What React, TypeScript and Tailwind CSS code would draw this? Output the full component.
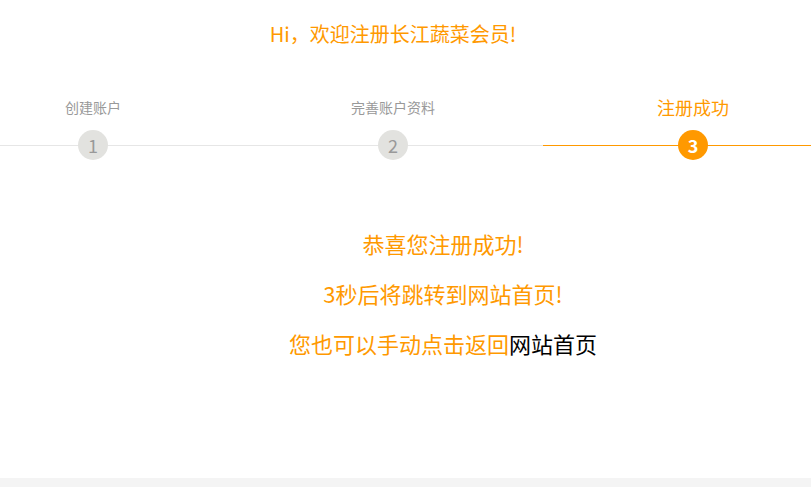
import React from "react";

const steps = [
  { n: 1, label: "创建账户", active: false },
  { n: 2, label: "完善账户资料", active: false },
  { n: 3, label: "注册成功", active: true },
];

const App: React.FC = () => {
  return (
    <div
      className="w-full h-[487px] overflow-hidden bg-white flex flex-col"
      style={{ fontFamily: '"Noto Sans CJK SC", "Noto Sans", sans-serif' }}
    >
      <div className="flex-1">
        <div className="w-[900px] ml-[-57px]">
          <h1 className="pt-[19px] h-[50px] text-center text-[20px] leading-[30px] text-[#ff9900]">
            Hi，欢迎注册长江蔬菜会员!
          </h1>
          <div className="flex mt-[41px]">
            {steps.map((s) => (
              <div key={s.n} className="w-[300px] flex flex-col items-center">
                <div
                  className={
                    s.active
                      ? "h-[32px] mb-[7px] leading-[32px] text-[18px] text-[#ff9900]"
                      : "h-[32px] mb-[7px] leading-[32px] text-[14px] text-[#999]"
                  }
                >
                  {s.label}
                </div>
                <div className="relative w-full h-[30px] flex items-center justify-center">
                  <div
                    className={
                      s.active
                        ? "absolute left-0 right-0 top-[15px] h-px bg-[#ff9900]"
                        : "absolute left-0 right-0 top-[15px] h-px bg-[#e6e6e6]"
                    }
                  />
                  <div
                    className={
                      s.active
                        ? "relative w-[30px] h-[30px] rounded-full bg-[#ff9900] text-white font-bold text-[18px] flex items-center justify-center"
                        : "relative w-[30px] h-[30px] rounded-full bg-[#e2e2df] text-[#999] text-[18px] flex items-center justify-center"
                    }
                  >
                    {s.n}
                  </div>
                </div>
              </div>
            ))}
          </div>
          <div className="mt-[58px] pl-[100px] text-center text-[22px] leading-[50px] text-[#ff9900]">
            <p>恭喜您注册成功!</p>
            <p>3秒后将跳转到网站首页!</p>
            <p>
              您也可以手动点击返回<a className="text-black">网站首页</a>
            </p>
          </div>
        </div>
      </div>
      <div className="h-[9px] bg-[#f4f4f4]" />
    </div>
  );
};

export default App;
